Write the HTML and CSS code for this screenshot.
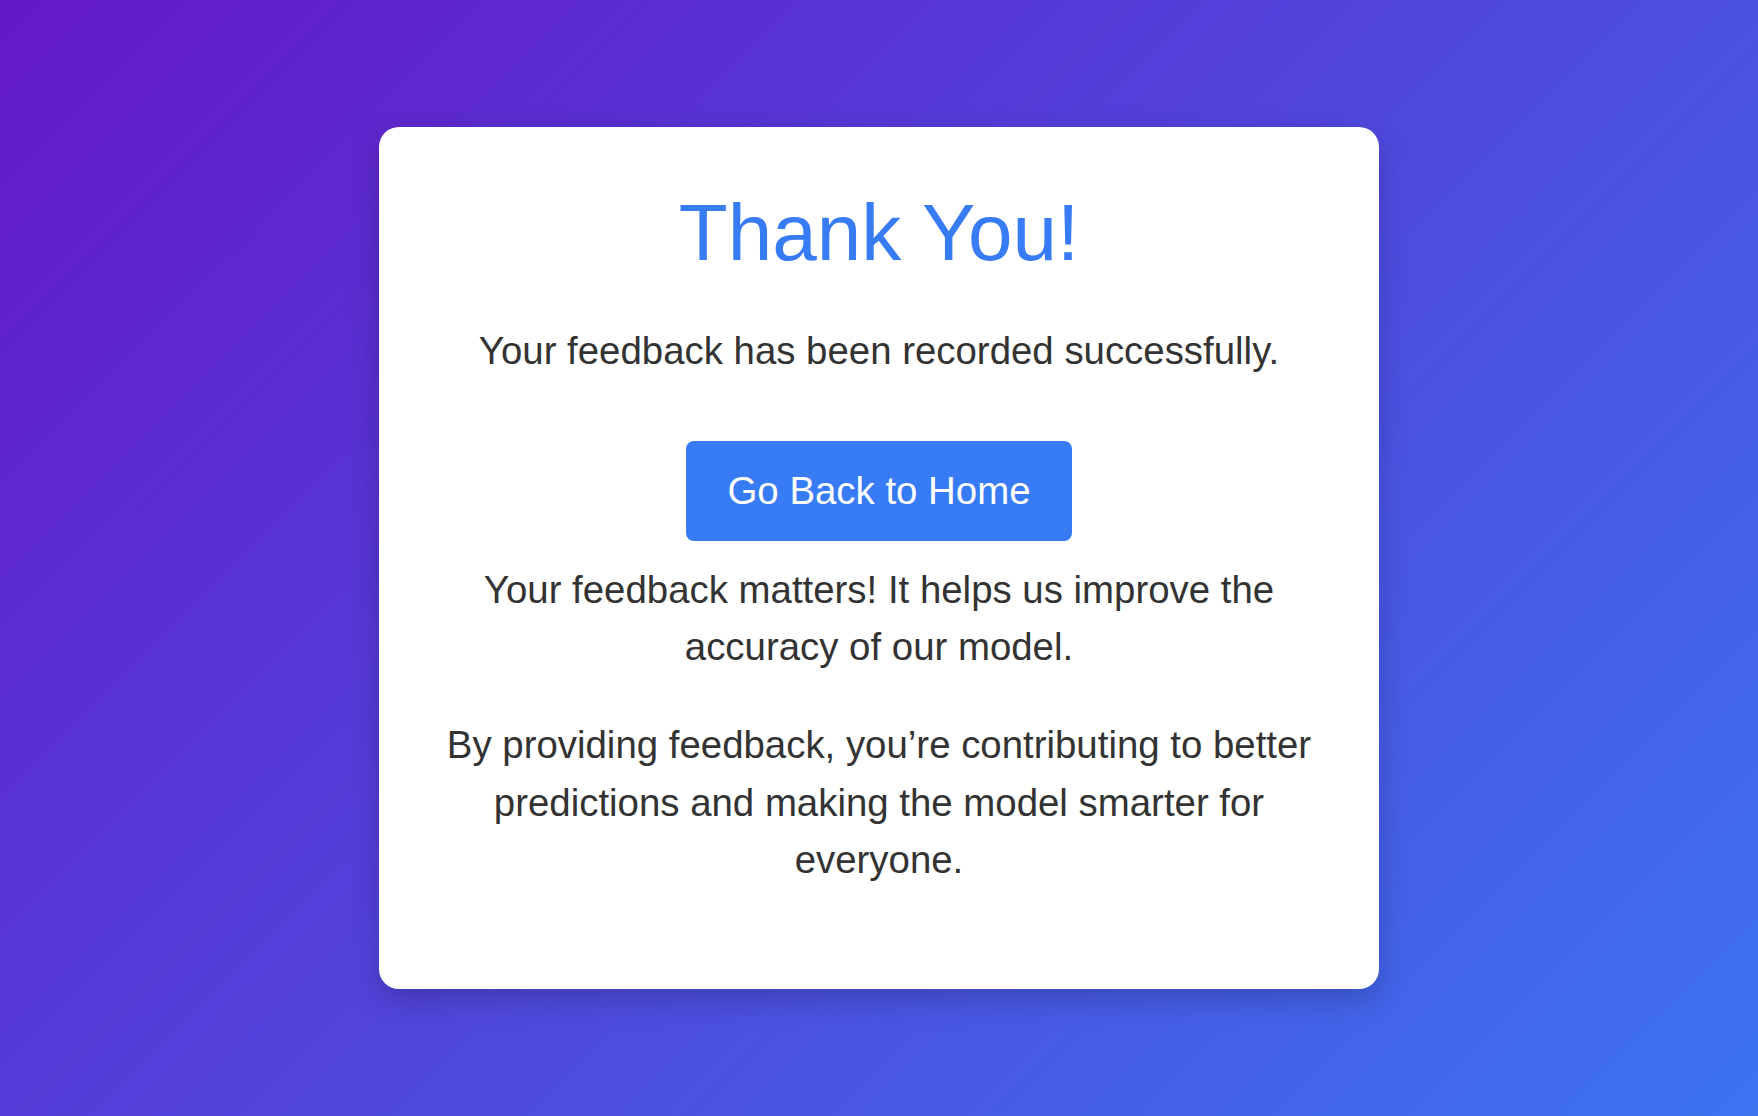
FILE: index.html
```html
<!DOCTYPE html>
<html lang="en">
<head>
<meta charset="utf-8">
<title>Thank You</title>
<link rel="stylesheet" href="styles.css">
</head>
<body>
  <main class="card">
    <h1 class="title">Thank You!</h1>
    <p class="subtitle">Your feedback has been recorded successfully.</p>
    <a class="btn" href="#">Go Back to Home</a>
    <p class="note">Your feedback matters! It helps us improve the accuracy of our model.</p>
    <p class="note last">By providing feedback, you’re contributing to better predictions and making the model smarter for everyone.</p>
  </main>
</body>
</html>
```

FILE: styles.css
```css
html, body {
  margin: 0;
  padding: 0;
}
body {
  min-height: 100vh;
  display: flex;
  align-items: center;
  justify-content: center;
  background: linear-gradient(135deg, #6418c8 0%, #3c74f0 100%);
  font-family: "Liberation Sans", Arial, sans-serif;
  color: #333;
}
.card {
  box-sizing: border-box;
  width: 1000px;
  background: #fff;
  border-radius: 20px;
  padding: 60px 60px 100px;
  box-shadow: 0 10px 30px rgba(0, 0, 0, 0.2);
  display: flex;
  flex-direction: column;
  align-items: center;
  text-align: center;
}
.title {
  margin: 0 0 43px;
  font-size: 80px;
  font-weight: normal;
  line-height: normal;
  color: #377bf5;
}
.subtitle {
  margin: 0 0 61px;
  font-size: 38.4px;
  line-height: 57.6px;
}
.btn {
  display: block;
  margin: 0 0 20px;
  padding: 28px 42px;
  background: #377bf5;
  color: #fff;
  border-radius: 8px;
  font-size: 38.4px;
  line-height: 44px;
  text-decoration: none;
}
.note {
  margin: 0 0 40px;
  font-size: 38.4px;
  line-height: 57.6px;
}
.note.last {
  margin-bottom: 0;
}
```
